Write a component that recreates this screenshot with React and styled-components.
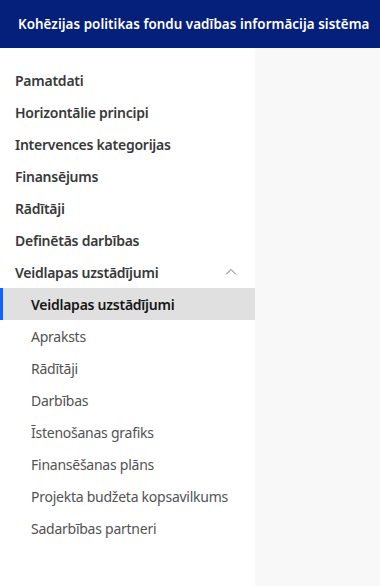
import styled, { createGlobalStyle } from "styled-components";

const GlobalStyle = createGlobalStyle`
  html, body { margin: 0; padding: 0; }
  body { font-family: "Noto Sans", "Open Sans", sans-serif; background: #fff; }
`;

const mainItems = [
  "Pamatdati",
  "Horizontālie principi",
  "Intervences kategorijas",
  "Finansējums",
  "Rādītāji",
  "Definētās darbības",
];

const subItems = [
  "Veidlapas uzstādījumi",
  "Apraksts",
  "Rādītāji",
  "Darbības",
  "Īstenošanas grafiks",
  "Finansēšanas plāns",
  "Projekta budžeta kopsavilkums",
  "Sadarbības partneri",
];

export default function App() {
  return (
    <>
      <GlobalStyle />
      <Page>
        <Header>
          <Title>Kohēzijas politikas fondu vadības informācija sistēma</Title>
        </Header>
        <Body>
          <SideNav>
            {mainItems.map((item) => (
              <NavItem key={item}>{item}</NavItem>
            ))}
            <NavItem as="div">
              Veidlapas uzstādījumi
              <svg width="16" height="16" viewBox="0 0 16 16">
                <path d="M3 10.5l5-5 5 5" fill="none" stroke="#6f6f6f" strokeWidth="1" />
              </svg>
            </NavItem>
            {subItems.map((item, i) => (
              <SubItem key={item} $active={i === 0}>
                {item}
              </SubItem>
            ))}
          </SideNav>
          <Content />
        </Body>
      </Page>
    </>
  );
}

const Page = styled.div`
  display: flex;
  flex-direction: column;
  height: 100vh;
`;

const Header = styled.header`
  height: 48px;
  background: #05207a;
  display: flex;
  align-items: center;
  padding-left: 18px;
  flex-shrink: 0;
`;

const Title = styled.div`
  color: #ffffff;
  font-size: 13.4px;
  font-weight: 600;
  white-space: nowrap;
  letter-spacing: 0.05px;
`;

const Body = styled.div`
  display: flex;
  flex: 1;
`;

const SideNav = styled.nav`
  width: 255px;
  padding-top: 16px;
  display: flex;
  flex-direction: column;
  background: #fff;
`;

const NavItem = styled.a`
  height: 32px;
  display: flex;
  align-items: center;
  justify-content: space-between;
  padding: 0 16px 0 15px;
  font-size: 14px;
  font-weight: 600;
  letter-spacing: -0.25px;
  color: #393939;
`;

const SubItem = styled.a`
  height: 32px;
  display: flex;
  align-items: center;
  padding-left: 31px;
  font-size: 14px;
  letter-spacing: -0.25px;
  font-weight: ${(p) => (p.$active ? 600 : 400)};
  color: ${(p) => (p.$active ? "#161616" : "#525252")};
  background: ${(p) => (p.$active ? "#e0e0e0" : "transparent")};
  box-shadow: ${(p) => (p.$active ? "inset 3px 0 0 #0f62fe" : "none")};
`;

const Content = styled.main`
  flex: 1;
  background: #f8f8f8;
`;
